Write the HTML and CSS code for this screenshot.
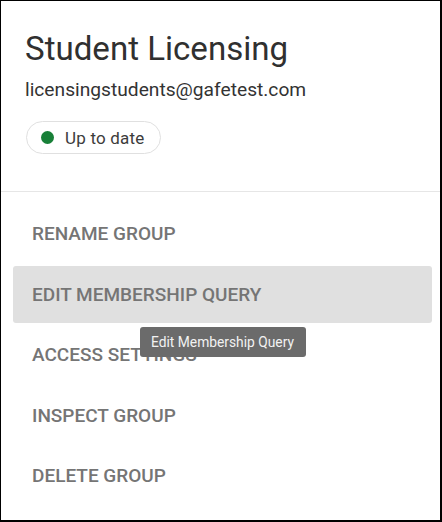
FILE: index.html
```html
<!DOCTYPE html>
<html>
<head>
<meta charset="utf-8">
<link rel="stylesheet" href="styles.css">
</head>
<body>
<div class="panel">
  <div class="header">
    <div class="title">Student Licensing</div>
    <div class="email">licensingstudents@gafetest.com</div>
    <div class="chip"><span class="dot"></span><span class="chip-text">Up to date</span></div>
  </div>
  <div class="menu">
    <div class="item">RENAME GROUP</div>
    <div class="item active">EDIT MEMBERSHIP QUERY</div>
    <div class="item">ACCESS SETTINGS</div>
    <div class="item">INSPECT GROUP</div>
    <div class="item">DELETE GROUP</div>
  </div>
  <div class="tooltip">Edit Membership Query</div>
</div>
</body>
</html>
```
FILE: styles.css
```css
html, body {
  margin: 0;
  padding: 0;
  background: #fff;
}
.panel {
  position: relative;
  box-sizing: border-box;
  width: 442px;
  height: 522px;
  border: 1px solid #000;
  border-right-width: 2px;
  border-bottom-width: 2px;
  background: #fff;
  font-family: Roboto, "Liberation Sans", sans-serif;
  overflow: hidden;
}
.header {
  padding: 28px 24px 37px 24px;
  border-bottom: 1px solid #e6e6e6;
}
.title {
  font-size: 33.1px;
  line-height: 40px;
  color: #303030;
}
.email {
  margin-top: 9px;
  font-size: 19.2px;
  line-height: 24px;
  color: #333;
}
.chip {
  margin-top: 19px;
  display: inline-flex;
  align-items: center;
  height: 33px;
  box-sizing: border-box;
  padding: 0 15px 0 14px;
  margin-left: 1px;
  border: 1px solid #e0e0e0;
  border-radius: 17px;
}
.dot {
  width: 13px;
  height: 13px;
  border-radius: 50%;
  background: #188038;
  margin-right: 11px;
}
.chip-text {
  font-size: 17px;
  color: #3c3c3c;
  letter-spacing: 0.2px;
}
.menu {
  padding-top: 13px;
  display: flex;
  flex-direction: column;
  gap: 3.5px;
}
.item {
  height: 57px;
  display: flex;
  align-items: center;
  margin: 0 8px 0 12px;
  padding-left: 19px;
  border-radius: 3px;
  font-size: 19px;
  font-weight: 500;
  color: #757575;
}
.item.active {
  background: #e0e0e0;
}
.tooltip {
  position: absolute;
  left: 139px;
  top: 326px;
  width: 166px;
  height: 30px;
  box-sizing: border-box;
  padding-left: 11px;
  display: flex;
  align-items: center;
  background: #6b6b6b;
  border-radius: 3px;
  color: #f2f2f2;
  font-size: 13.8px;
}
```
